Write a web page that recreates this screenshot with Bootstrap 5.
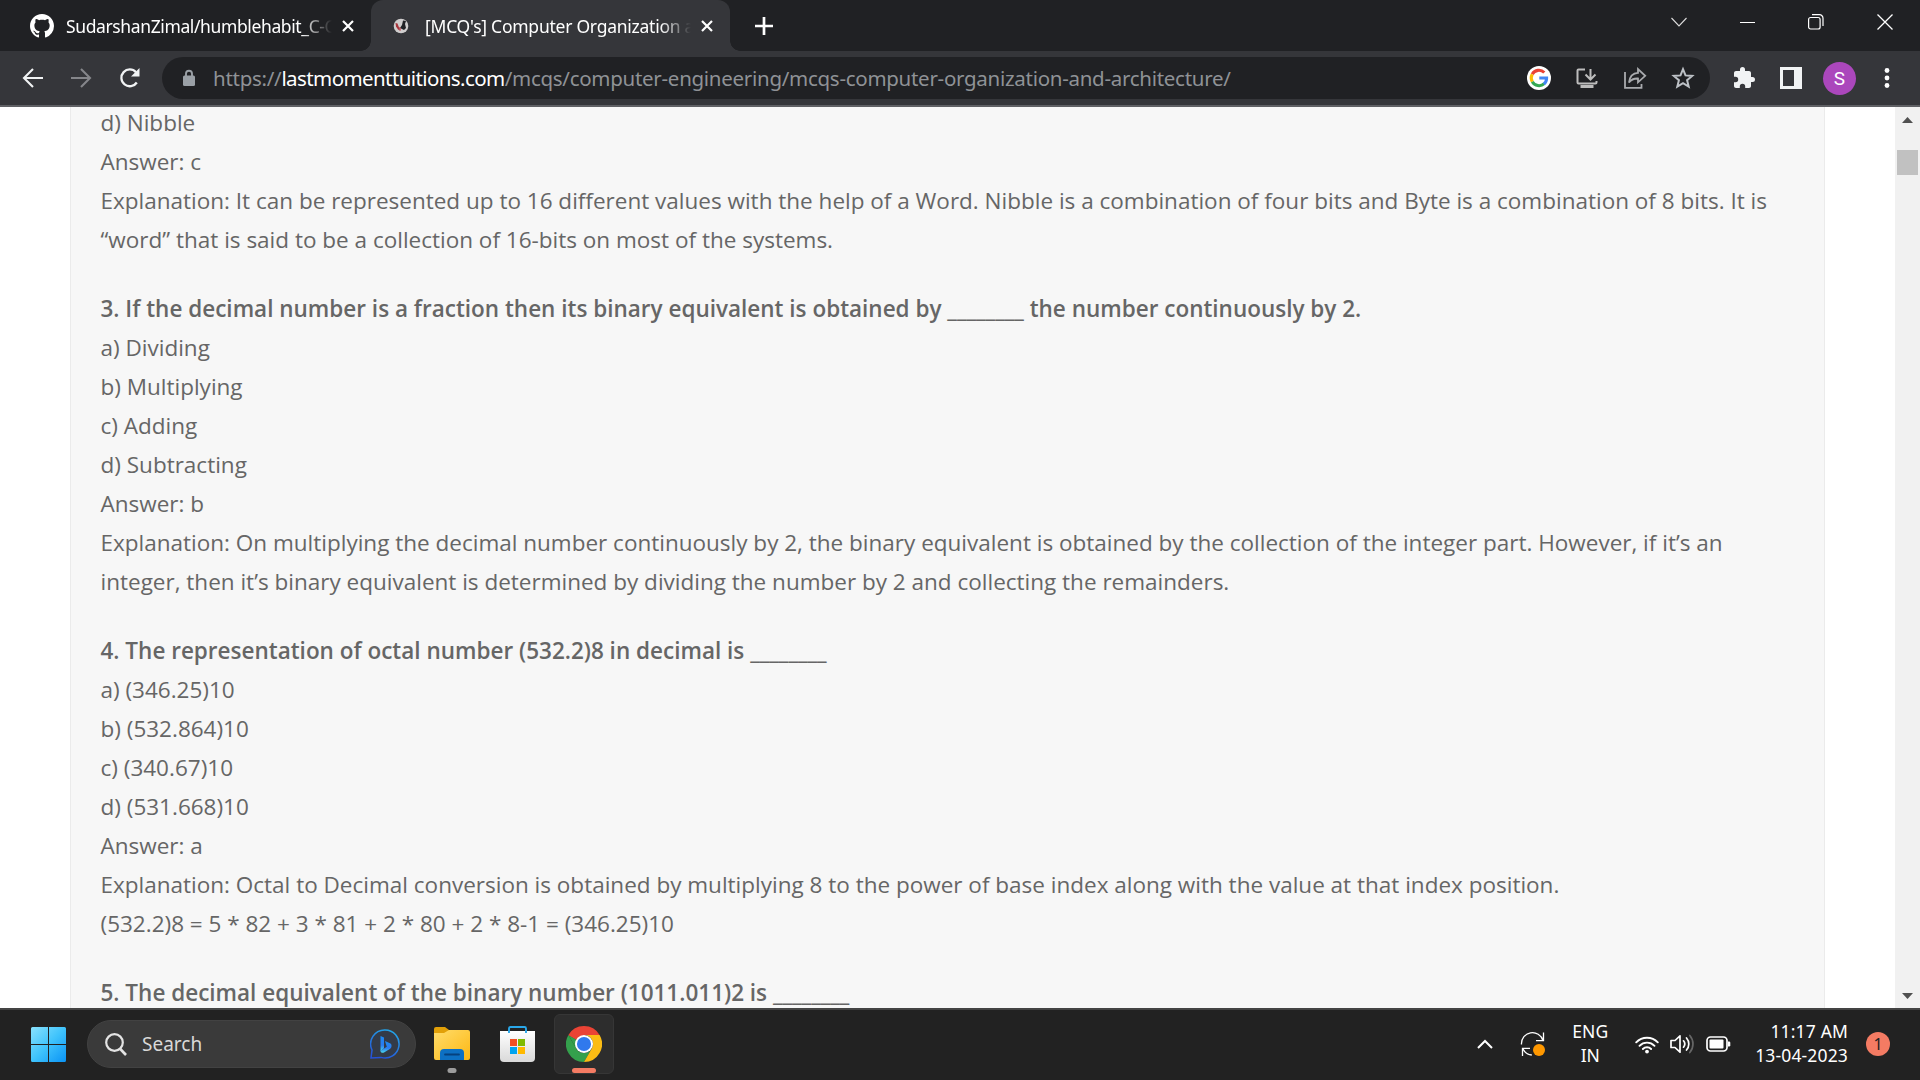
<!DOCTYPE html>
<html lang="en">
<head>
<meta charset="utf-8">
<title>[MCQ's] Computer Organization and Architecture</title>
<link href="https://cdn.jsdelivr.net/npm/bootstrap@5.3.0/dist/css/bootstrap.min.css" rel="stylesheet">
<style>
html,body{height:100%;overflow:hidden}
body{font-family:"Open Sans","Noto Sans",sans-serif;background:#fff;width:1920px;height:1080px}
svg{display:block;flex:none}
.ui-font{font-family:"Noto Sans","Open Sans",sans-serif;white-space:nowrap}
/* tab strip */
.tabstrip{height:51px;background:#202124;color:#fff}
.btab{height:51px;position:relative}
.btab-idle{width:371px;padding-left:30px;padding-right:17px}
.btab-live{width:359px;padding-left:22px;padding-right:17px;background:#35363a;border-radius:12px 12px 0 0}
.btab-live::before,.btab-live::after{content:"";position:absolute;bottom:0;width:10px;height:10px}
.btab-live::before{left:-10px;background:radial-gradient(circle at 0 0,transparent 9.5px,#35363a 10px)}
.btab-live::after{right:-10px;background:radial-gradient(circle at 100% 0,transparent 9.5px,#35363a 10px)}
.tab-title{font-size:17.5px;line-height:24px;color:#fff;
 -webkit-mask-image:linear-gradient(90deg,#000 235px,transparent 266px);mask-image:linear-gradient(90deg,#000 235px,transparent 266px)}
.t-one{width:272px;margin-left:12px;letter-spacing:-.38px}
.t-two{width:272px;margin-left:16px;letter-spacing:-.25px}
.win-btns{gap:53px;padding-right:27px;height:43px}
/* toolbar */
.toolbar{height:56px;background:#35363a;border-bottom:2px solid #5f6064;padding:0 30px 0 20px}
.omnibox{height:42px;width:1548px;border-radius:21px;background:#202124;margin-left:18px;padding:0 15px 0 20px}
.url{font-size:20.5px;line-height:28px;color:#8f9296;margin-left:17px;letter-spacing:-.28px}
.url b{font-weight:400;color:#fff;letter-spacing:-.59px}
.avatar-s{width:33px;height:33px;background:#ab47bc;color:#fff;font:19px/33px Roboto,sans-serif}
/* page */
.viewport-area{height:901px}
.article-box{width:1755px;margin-left:70px;background:#f7f7f7;border:solid #ebebeb;border-width:0 1px;padding:0 29.5px;color:#666;font-size:22.5px;line-height:39px;overflow:hidden}
.article-inner{margin-top:-4.5px}
.article-inner p{margin:0 0 30px;white-space:nowrap}
.article-inner strong{font-weight:600}
.scroller{width:25px;background:#f1f1f1;padding:10px 0 9px}
.thumb{width:21px;height:25px;background:#c1c1c1;margin-top:27px}
/* taskbar */
.taskbar{height:72px;background:#222;border-top:2px solid #444;color:#fff;padding-left:31px;padding-right:30px;padding-bottom:2px}
.search-pill{width:329px;height:48px;border-radius:24px;background:#3a3a3a;border:1px solid #424242;margin-left:21px;padding:0 15px 0 16px;font-size:19px;color:#d8d8d8}
.app-slot{height:60px;position:relative}
.app-slot .run-mark{position:absolute;bottom:1px;left:50%;transform:translateX(-50%);height:5px;border-radius:3px}
.live-app{width:60px;border-radius:6px;background:#2d2d2d;border:1px solid #363636}
.tray-text{font-size:17.5px;line-height:23.500px;padding-bottom:1px}
.note-dot{width:24px;height:24px;background:#f47b63;color:#222;font-size:16px;line-height:24px}
</style>
<script src="https://cdn.jsdelivr.net/npm/bootstrap@5.3.0/dist/js/bootstrap.bundle.min.js"></script>
</head>
<body class="d-flex flex-column">
<header class="ui-font">
 <div class="tabstrip d-flex">
  <div class="btab btab-idle d-flex align-items-center">
   <svg width="24" height="24" viewBox="0 0 16 16" fill="#fff"><path d="M8 0C3.58 0 0 3.58 0 8c0 3.54 2.29 6.53 5.47 7.59.4.07.55-.17.55-.38 0-.19-.01-.82-.01-1.49-2.01.37-2.53-.49-2.69-.94-.09-.23-.48-.94-.82-1.13-.28-.15-.68-.52-.01-.53.63-.01 1.08.58 1.23.82.72 1.21 1.87.87 2.33.66.07-.52.28-.87.51-1.07-1.78-.2-3.64-.89-3.64-3.95 0-.87.31-1.59.82-2.15-.08-.2-.36-1.02.08-2.12 0 0 .67-.21 2.2.82.64-.18 1.32-.27 2-.27s1.36.09 2 .27c1.53-1.04 2.2-.82 2.2-.82.44 1.1.16 1.92.08 2.12.51.56.82 1.27.82 2.15 0 3.07-1.87 3.75-3.65 3.95.29.25.54.73.54 1.48 0 1.07-.01 1.93-.01 2.2 0 .21.15.46.55.38A8.01 8.01 0 0 0 16 8c0-4.42-3.58-8-8-8z"/></svg>
   <div class="tab-title t-one">SudarshanZimal/humblehabit_C-C</div>
   <svg class="ms-auto" width="12" height="12" viewBox="0 0 12 12"><path d="M1 1l10 10M11 1L1 11" stroke="#fff" stroke-width="2.2"/></svg>
  </div>
  <div class="btab btab-live d-flex align-items-center">
   <svg width="16" height="16" viewBox="0 0 16 16"><circle cx="8" cy="8" r="7.3" fill="#cfcdcd"/><path d="M2.500 5l2 .5 1.500 4 1 3-2-1-2-3z" fill="#a7343b"/><path d="M10 2.500l3 .5-1 3 1 4-2 2-2-1-2-1 2-3z" fill="#202124"/><path d="M6 9l2 1-.5 3-1.500-1z" fill="#b9545a"/></svg>
   <div class="tab-title t-two">[MCQ's] Computer Organization a</div>
   <svg class="ms-auto" width="12" height="12" viewBox="0 0 12 12"><path d="M1 1l10 10M11 1L1 11" stroke="#fff" stroke-width="2.2"/></svg>
  </div>
  <div class="d-flex align-items-center ps-4"><svg width="20" height="20" viewBox="0 0 20 20"><path d="M10 1v18M1 10h18" stroke="#fff" stroke-width="2.7"/></svg></div>
  <div class="win-btns d-flex align-items-center ms-auto">
   <svg width="16" height="16" viewBox="0 0 16 16"><path d="M.5 4L8 12l7.500-8" fill="none" stroke="#ddd" stroke-width="1.1"/></svg>
   <svg width="15" height="16" viewBox="0 0 15 16"><path d="M0 8.500h15" stroke="#fff"/></svg>
   <svg width="16" height="16" viewBox="0 0 16 16" fill="none" stroke="#fff" stroke-width="1.2"><rect x=".6" y="3.500" width="11.500" height="11.500" rx="2"/><path d="M4 .7h7.500a3.500 3.500 0 0 1 3.500 3.500V12"/></svg>
   <svg width="16" height="16" viewBox="0 0 16 16"><path d="M.5.5l15 15M15.500.5l-15 15" stroke="#fff" stroke-width="1.3"/></svg>
  </div>
 </div>
 <div class="toolbar d-flex align-items-center">
  <svg width="26" height="26" viewBox="0 0 26 26"><path d="M23 13H4.500M13 4l-9 9 9 9" fill="none" stroke="#f1f3f4" stroke-width="2.1"/></svg>
  <svg class="ms-4" width="26" height="26" viewBox="0 0 26 26" style="margin-right:22px"><path d="M1 13h18.500M11 4l9 9-9 9" fill="none" stroke="#85868a" stroke-width="2.1"/></svg>
  <svg width="26" height="26" viewBox="0 0 26 26"><path d="M18.800 17.500a8.400 8.400 0 1 1-.8-10.300" fill="none" stroke="#f1f3f4" stroke-width="2.3"/><path d="M21.500 3v8.500H13z" fill="#f1f3f4"/></svg>
  <div class="omnibox d-flex align-items-center">
   <svg width="14" height="18" viewBox="0 0 14 18"><path d="M4 7V4.800a3 3 0 0 1 6 0V7" fill="none" stroke="#9aa0a6" stroke-width="1.900"/><rect x="1" y="6.500" width="12" height="10.500" rx="1.500" fill="#9aa0a6"/></svg>
   <div class="url">https://<b>lastmomenttuitions.com</b>/mcqs/computer-engineering/mcqs-computer-organization-and-architecture/</div>
   <div class="d-flex align-items-center gap-4 ms-auto">
    <svg width="24" height="24" viewBox="0 0 24 24"><circle cx="12" cy="12" r="12" fill="#fff"/><g fill="none" stroke-width="3.100"><path d="M5.200 8.200A7.700 7.700 0 0 1 17.300 6.500" stroke="#ea4335"/><path d="M5.300 15.700A7.700 7.700 0 0 1 5.200 8.200" stroke="#fbbc05"/><path d="M17.200 17.700A7.700 7.700 0 0 1 5.300 15.700" stroke="#34a853"/><path d="M12.300 12h7.300a7.700 7.700 0 0 1-2.700 6" stroke="#4285f4"/></g></svg>
    <svg width="24" height="24" viewBox="0 0 24 24" fill="none" stroke="#bdbdbd" stroke-width="2"><path d="M10 3.500H3.500a1 1 0 0 0-1 1v12a1 1 0 0 0 1 1h17a1 1 0 0 0 1-1V15M15.500 3v10M10.500 8.500l5 5 5-5"/><path d="M5.500 20.500h13" stroke-width="3"/></svg>
    <svg width="24" height="24" viewBox="0 0 24 24" fill="none" stroke="#a9abae" stroke-width="1.800"><path d="M2 6v15.800h16.500V18"/><path d="M6 16.500c.7-6 4-9.500 9-9.700V3l7.200 6.800-7.200 6.500v-3.800c-4-.2-7 1.200-9 4z"/></svg>
    <svg width="24" height="24" viewBox="0 0 24 24"><path d="M12 3.200l2.500 6.200 6.700.5-5.100 4.300 1.600 6.500-5.700-3.500-5.700 3.500 1.600-6.500-5.100-4.300 6.700-.5z" fill="none" stroke="#bdc1c6" stroke-width="2"/></svg>
   </div>
  </div>
  <div class="d-flex align-items-center ms-auto">
   <svg width="24" height="24" viewBox="0 0 24 24"><path d="M20.500 11H19V7c0-1.100-.9-2-2-2h-4V3.500a2.500 2.500 0 0 0-5 0V5H4c-1.100 0-2 .9-2 2v3.800h1.500a2.700 2.700 0 0 1 0 5.400H2V20c0 1.100.9 2 2 2h3.800v-1.500a2.700 2.700 0 0 1 5.400 0V22H17c1.100 0 2-.9 2-2v-4h1.500a2.500 2.500 0 0 0 0-5z" fill="#f1f3f4"/></svg>
   <svg width="22" height="22" viewBox="0 0 22 22" style="margin-left:24px"><path d="M0 0h22v22H0zM3 3v16h11V3z" fill="#f1f3f4" fill-rule="evenodd"/></svg>
   <div class="avatar-s rounded-circle text-center" style="margin-left:21px">S</div>
   <svg width="6" height="24" viewBox="0 0 6 24" style="margin-left:28px" fill="#fff"><circle cx="3" cy="4.500" r="2.400"/><circle cx="3" cy="12" r="2.400"/><circle cx="3" cy="19.500" r="2.400"/></svg>
  </div>
 </div>
</header>
<main class="viewport-area d-flex">
 <article class="article-box">
  <div class="article-inner">
   <p>d) Nibble<br>Answer: c<br>Explanation: It can be represented up to 16 different values with the help of a Word. Nibble is a combination of four bits and Byte is a combination of 8 bits. It is<br>“word” that is said to be a collection of 16-bits on most of the systems.</p>
   <p><strong>3. If the decimal number is a fraction then its binary equivalent is obtained by ________ the number continuously by 2.</strong><br>a) Dividing<br>b) Multiplying<br>c) Adding<br>d) Subtracting<br>Answer: b<br>Explanation: On multiplying the decimal number continuously by 2, the binary equivalent is obtained by the collection of the integer part. However, if it’s an<br>integer, then it’s binary equivalent is determined by dividing the number by 2 and collecting the remainders.</p>
   <p><strong>4. The representation of octal number (532.2)8 in decimal is ________</strong><br>a) (346.25)10<br>b) (532.864)10<br>c) (340.67)10<br>d) (531.668)10<br>Answer: a<br>Explanation: Octal to Decimal conversion is obtained by multiplying 8 to the power of base index along with the value at that index position.<br>(532.2)8 = 5 * 82 + 3 * 81 + 2 * 80 + 2 * 8-1 = (346.25)10</p>
   <p><strong>5. The decimal equivalent of the binary number (1011.011)2 is ________</strong></p>
  </div>
 </article>
 <div class="scroller d-flex flex-column align-items-center ms-auto">
  <svg width="11" height="6" viewBox="0 0 11 6"><path d="M0 6L5.500 0 11 6z" fill="#505050"/></svg>
  <div class="thumb"></div>
  <svg class="mt-auto" width="11" height="6" viewBox="0 0 11 6"><path d="M0 0l5.500 6L11 0z" fill="#505050"/></svg>
 </div>
</main>
<footer class="taskbar ui-font d-flex align-items-center">
 <svg width="35" height="35" viewBox="0 0 35 35"><defs><linearGradient id="win" x1="0" y1="0" x2="1" y2="1"><stop stop-color="#8ae2fd"/><stop offset=".5" stop-color="#3fc3fc"/><stop offset="1" stop-color="#0a93f5"/></linearGradient></defs><path d="M1.500 0H17v17H0V1.500A1.500 1.500 0 0 1 1.500 0zM18 0h15.500A1.500 1.500 0 0 1 35 1.500V17H18zM0 18h17v17H1.500A1.500 1.500 0 0 1 0 33.500zM18 18h17v15.500a1.500 1.500 0 0 1-1.500 1.500H18z" fill="url(#win)"/></svg>
 <div class="search-pill d-flex align-items-center">
  <svg width="24" height="24" viewBox="0 0 24 24" fill="none" stroke="#e4e4e4" stroke-width="2.200"><circle cx="10.500" cy="10.500" r="8.300"/><path d="M16.300 17l5.700 6" stroke-width="2.600"/></svg>
  <span style="margin-left:14px">Search</span>
  <svg class="ms-auto" width="30" height="30" viewBox="0 0 30 30"><defs><linearGradient id="bing" x1=".7" y1="0" x2=".3" y2="1"><stop stop-color="#23a5e8"/><stop offset="1" stop-color="#2552d8"/></linearGradient><linearGradient id="bb" x1="0" y1="0" x2="0" y2="1"><stop stop-color="#1b8bf2"/><stop offset=".6" stop-color="#2c7bf0"/><stop offset="1" stop-color="#47d8f0"/></linearGradient></defs><path d="M15 1a14 14 0 1 1-4 27.400L1 29l1-8A14 14 0 0 1 15 1z" fill="#333b48" stroke="url(#bing)" stroke-width="1.500"/><path d="M10.500 7l3.500 1.500v10.800l-3.500 3z" fill="url(#bb)"/><path d="M15 12l5.500 2.500c1.500 1 1.500 4-.3 5.300L14 23.500c-1.800.7-3.500 0-3.500-1.800l6.300-4z" fill="url(#bb)"/></svg>
 </div>
 <div class="app-slot d-flex align-items-center" style="margin-left:18px">
  <svg width="36" height="34" viewBox="0 0 36 34"><defs><linearGradient id="fold" x1="0" y1="0" x2="1" y2="1"><stop stop-color="#ffdc6b"/><stop offset="1" stop-color="#fdb813"/></linearGradient></defs><path d="M0 2a2 2 0 0 1 2-2h9l4 3v6H0z" fill="#e2a008"/><path d="M0 6h10l5-3h19a2 2 0 0 1 2 2v26a2 2 0 0 1-2 2H2a2 2 0 0 1-2-2z" fill="url(#fold)"/><path d="M6 33v-7a4 4 0 0 1 4-4h16a4 4 0 0 1 4 4v7z" fill="#0d70c3"/><path d="M11 27.500h14" stroke="#06417e" stroke-width="1.800" stroke-linecap="round"/></svg>
  <span class="run-mark" style="width:9px;background:#9c9c9c"></span>
 </div>
 <svg width="35" height="36" viewBox="0 0 35 36" style="margin-left:30px"><defs><linearGradient id="bag" x1="0" y1="0" x2="0" y2="1"><stop stop-color="#fff"/><stop offset="1" stop-color="#d9d9d9"/></linearGradient></defs><path d="M0 5h35v27a4 4 0 0 1-4 4H4a4 4 0 0 1-4-4z" fill="url(#bag)"/><path d="M9 7V2.500A1.500 1.500 0 0 1 10.500 1h14A1.500 1.500 0 0 1 26 2.500V7" fill="none" stroke="#29a7e9" stroke-width="1.900"/><path d="M10 13h7v7h-7z" fill="#f25022"/><path d="M18 13h7v7h-7z" fill="#7fba00"/><path d="M10 21h7v7h-7z" fill="#00a4ef"/><path d="M18 21h7v7h-7z" fill="#ffb900"/></svg>
 <div class="app-slot live-app d-flex align-items-center justify-content-center" style="margin-left:19px">
  <svg width="36" height="36" viewBox="0 0 48 48"><path d="M24 0a24 24 0 0 1 20.800 12H24a12 12 0 0 0-10.400 6L3.200 12A24 24 0 0 1 24 0z" fill="#ea4335"/><path d="M3.200 12a24 24 0 0 0 20.800 36l10.400-18A12 12 0 0 1 13.600 30z" fill="#34a04c"/><path d="M3.200 12L13.600 30V18z" fill="#34a04c"/><path d="M3.200 12h20.800v12z" fill="#ea4335"/><path d="M44.800 12A24 24 0 0 1 24 48l10.400-18A12 12 0 0 0 24 12z" fill="#fbbc14"/><circle cx="24" cy="24" r="12" fill="#fff"/><circle cx="24" cy="24" r="9.400" fill="#3079ed"/></svg>
  <span class="run-mark" style="width:24px;background:#f47b63;bottom:0"></span>
 </div>
 <div class="d-flex align-items-center ms-auto">
  <svg width="18" height="12" viewBox="0 0 18 12"><path d="M2 10l7-7 7 7" fill="none" stroke="#fff" stroke-width="2"/></svg>
  <svg width="26" height="26" viewBox="0 0 26 26" style="margin-left:26px" fill="none" stroke="#fff" stroke-width="1.300"><path d="M1.500 13.500a11 11 0 0 1 21.500-4M23.500 1.500v8.200H16M2.500 25v-7.700H10M2.800 17.500a11 11 0 0 0 9 6.500"/><circle cx="19" cy="19" r="6" fill="#ff9800" stroke="none"/></svg>
  <div class="tray-text text-center" style="margin-left:26px">ENG<br>IN</div>
  <svg width="24" height="19" viewBox="0 0 24 19" style="margin-left:27px" fill="none" stroke="#fff" stroke-width="1.900" stroke-linecap="round"><path d="M1.200 7.300a15 15 0 0 1 21.600 0M4.500 10.800a10.500 10.500 0 0 1 15 0M7.900 14a5.800 5.800 0 0 1 8.200 0"/><circle cx="12" cy="16.600" r="1.900" fill="#fff" stroke="none"/></svg>
  <svg width="25" height="22" viewBox="0 0 25 22" style="margin-left:11px" fill="none" stroke="#fff" stroke-width="1.700" stroke-linecap="round" stroke-linejoin="round"><path d="M1 7.500h4L10 2.800v16.400L5 14.500H1z"/><path d="M13.500 7.800a5 5 0 0 1 0 6.400M16.500 5a9 9 0 0 1 0 12"/><path d="M19.800 2.500a13 13 0 0 1 0 17" stroke="#666"/></svg>
  <svg width="25" height="16" viewBox="0 0 25 16" style="margin-left:11px"><rect x="1" y="1" width="20" height="14" rx="3.500" fill="none" stroke="#fff" stroke-width="1.700"/><rect x="3.500" y="3.500" width="14" height="9" rx="1" fill="#fff"/><path d="M22 5.500h1a1.300 1.300 0 0 1 1.300 1.300v2.400A1.300 1.300 0 0 1 23 10.500h-1z" fill="#fff"/></svg>
  <div class="tray-text text-end" style="margin-left:24px;letter-spacing:.15px">11:17 AM<br>13-04-2023</div>
  <div class="note-dot rounded-circle text-center" style="margin-left:18px">1</div>
 </div>
</footer>
</body>
</html>
